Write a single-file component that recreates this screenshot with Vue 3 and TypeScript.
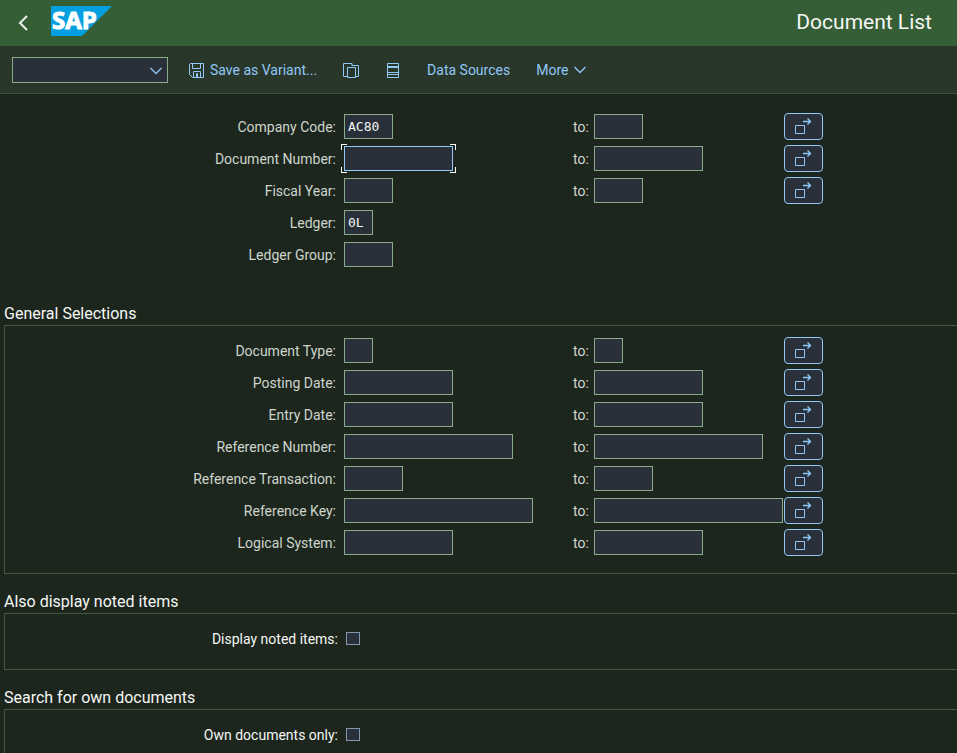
<script setup lang="ts">
import { ref } from 'vue'

interface Criterion {
  id: string
  label: string
  chars: number
  range: boolean
}

const variant = ref('')
const focusedField = ref('document-number')

const documentCriteria: Criterion[] = [
  { id: 'company-code', label: 'Company Code:', chars: 4, range: true },
  { id: 'document-number', label: 'Document Number:', chars: 10, range: true },
  { id: 'fiscal-year', label: 'Fiscal Year:', chars: 4, range: true },
  { id: 'ledger', label: 'Ledger:', chars: 2, range: false },
  { id: 'ledger-group', label: 'Ledger Group:', chars: 4, range: false },
]

const generalCriteria: Criterion[] = [
  { id: 'document-type', label: 'Document Type:', chars: 2, range: true },
  { id: 'posting-date', label: 'Posting Date:', chars: 10, range: true },
  { id: 'entry-date', label: 'Entry Date:', chars: 10, range: true },
  { id: 'reference-number', label: 'Reference Number:', chars: 16, range: true },
  { id: 'reference-transaction', label: 'Reference Transaction:', chars: 5, range: true },
  { id: 'reference-key', label: 'Reference Key:', chars: 18, range: true },
  { id: 'logical-system', label: 'Logical System:', chars: 10, range: true },
]

const blocks = [
  { title: '', rows: documentCriteria },
  { title: 'General Selections', rows: generalCriteria },
]

const checks = [
  { id: 'noted-items', title: 'Also display noted items', label: 'Display noted items:' },
  { id: 'own-documents', title: 'Search for own documents', label: 'Own documents only:' },
]

const values = ref<Record<string, string>>({ 'company-code': 'AC80', ledger: '0L' })
const flags = ref<Record<string, boolean>>({})

const fieldWidth = (chars: number) => ({ width: `${chars * 10 + 9}px` })
</script>

<template>
  <div class="page">
    <header class="shell">
      <button class="back" type="button" aria-label="Back">
        <svg width="12" height="16" viewBox="0 0 12 16"><path d="M10 1 3 8l7 7" /></svg>
      </button>
      <svg class="logo" width="61" height="30" viewBox="0 0 61 30" role="img" aria-label="SAP">
        <polygon points="0,0 61,0 31,30 0,30" />
        <text x="1" y="23">SAP</text>
      </svg>
      <h1>Document List</h1>
    </header>

    <nav class="toolbar">
      <div class="variant">
        <select v-model="variant" aria-label="Variant">
          <option value=""></option>
        </select>
        <svg class="chevron" width="12" height="8" viewBox="0 0 12 8"><path d="M.5 1 6 6.500 11.500 1" /></svg>
      </div>
      <button class="save" type="button">
        <svg width="15" height="15" viewBox="0 0 15 15">
          <path d="M1.500.5h13v14h-11l-3-3v-10l1-1zM3.500.5v5h8v-5M4.500 14.500v-6h7v6M7.500 14v-3.500h1V14" />
        </svg>
        Save as Variant...
      </button>
      <button class="copy" type="button" aria-label="Get Variant">
        <svg width="16" height="15" viewBox="0 0 16 15">
          <path d="M4 13.500H.5V.5H9V2M8.500 2.500h7v11H13M4.500 4.500h8v10h-8z" />
        </svg>
      </button>
      <button class="list" type="button" aria-label="Dynamic Selections">
        <svg width="12" height="15" viewBox="0 0 12 15">
          <path d="M.5.5h11v14H.5zM.5 3.500h11M.5 4.500h11M.5 9.500h11M.5 11.500h11" />
        </svg>
      </button>
      <button class="sources" type="button">Data Sources</button>
      <button class="more" type="button">
        More
        <svg class="chevron" width="12" height="8" viewBox="0 0 12 8"><path d="M.5 1 6 6.500 11.500 1" /></svg>
      </button>
    </nav>

    <main>
      <section v-for="block in blocks" :key="block.title">
        <h2 v-if="block.title">{{ block.title }}</h2>
        <div class="group" :class="{ framed: block.title }">
          <div v-for="row in block.rows" :key="row.id" class="row">
            <label class="name" :for="row.id">{{ row.label }}</label>
            <span class="field" :class="{ focused: focusedField === row.id }">
              <input
                :id="row.id"
                v-model="values[row.id]"
                type="text"
                :style="fieldWidth(row.chars)"
                @focus="focusedField = row.id"
              />
            </span>
            <template v-if="row.range">
              <label class="to" :for="row.id + '-to'">to:</label>
              <span class="field" :class="{ focused: focusedField === row.id + '-to' }">
                <input
                  :id="row.id + '-to'"
                  v-model="values[row.id + '-to']"
                  type="text"
                  :style="fieldWidth(row.chars)"
                  @focus="focusedField = row.id + '-to'"
                />
              </span>
              <button class="multi" type="button" aria-label="Multiple selection">
                <svg width="17" height="17" viewBox="0 0 17 17">
                  <path d="M.5 7.500h9v8h-9z" />
                  <path class="arrow" d="M8 3.500h7.500M12.500.5l3 3-3 3" />
                </svg>
              </button>
            </template>
          </div>
        </div>
      </section>

      <section v-for="check in checks" :key="check.id">
        <h2>{{ check.title }}</h2>
        <div class="group framed">
          <div class="check">
            <label :for="check.id">{{ check.label }}</label>
            <input :id="check.id" v-model="flags[check.id]" type="checkbox" />
          </div>
        </div>
      </section>
    </main>
  </div>
</template>

<style>
body {
  background: #1d261d;
}
</style>

<style scoped>
.page {
  height: 100vh;
  display: flex;
  flex-direction: column;
  overflow: hidden;
  background: #1d261d;
  color: #f5f7f5;
  font-family: Roboto, 'Liberation Sans', sans-serif;
  font-size: 14px;
}

.page * {
  box-sizing: border-box;
}

svg {
  display: block;
  flex: none;
  fill: none;
  stroke: #91c8f6;
}

button {
  padding: 0;
  border: 0;
  background: none;
  color: #91c8f6;
  font: inherit;
  cursor: pointer;
}

.shell {
  flex: none;
  display: flex;
  align-items: center;
  height: 46px;
  padding: 0 25px 0 17px;
  background: #355e37;
}

.back svg {
  stroke: #e8f3e8;
  stroke-width: 2;
}

.chevron,
.arrow {
  stroke-width: 1.3;
}

.shell .logo {
  margin: 0 auto 4px 22px;
  overflow: visible;
  stroke: none;
}

.logo polygon {
  fill: #049fe0;
}

.logo text {
  fill: #fff;
  stroke: #fff;
  stroke-width: 1px;
  font: 700 24px 'Open Sans', sans-serif;
}

h1 {
  margin: 0;
  padding-bottom: 2px;
  font-size: 21px;
  font-weight: 400;
  line-height: 28px;
}

.toolbar {
  flex: none;
  display: flex;
  align-items: center;
  padding: 11px 12px 10px;
  border-bottom: 1px solid #3c523d;
  background: #29372a;
}

.toolbar button {
  display: flex;
  align-items: center;
  gap: 6px;
  height: 26px;
  white-space: nowrap;
}

.variant {
  position: relative;
  width: 156px;
  margin-right: 21px;
}

.variant select {
  display: block;
  width: 100%;
  height: 26px;
  border: 1px solid #89ab88;
  border-radius: 0;
  background: #29303a;
  color: inherit;
  font: inherit;
  appearance: none;
}

.variant svg {
  position: absolute;
  top: 10px;
  right: 6px;
  pointer-events: none;
}

.save,
.sources {
  margin-right: 26px;
}

.copy,
.list {
  margin-right: 28px;
}

main {
  flex: 1;
  min-height: 0;
  overflow: hidden;
  padding-left: 4px;
}

h2 {
  margin: 0;
  padding-top: 17px;
  font-size: 16px;
  font-weight: 400;
  line-height: 22px;
}

.group {
  display: flex;
  flex-direction: column;
  gap: 5px;
  padding: 19px 0 18px 1px;
}

.framed {
  padding: 11px 0 17px;
  border: 1px solid #3c5a3d;
  border-right: 0;
}

.row {
  display: grid;
  grid-template-columns: 339px 229px 21px 190px 39px;
  align-items: center;
  height: 27px;
}

.name,
.to {
  color: #cdd5cd;
}

.name {
  padding-right: 8px;
  text-align: right;
}

.field {
  position: relative;
  justify-self: start;
}

.field input {
  display: block;
  height: 25px;
  padding: 0 3px;
  border: 1px solid #89ab88;
  border-radius: 0;
  outline: 0;
  background: #29303a;
  color: #f5f7f5;
  font: 13px 'DejaVu Sans Mono', monospace;
}

.focused input {
  border-color: #91c8f6;
}

/* white corner brackets around the active field */
.focused::after {
  content: '';
  position: absolute;
  inset: -2px -3px;
  pointer-events: none;
  --ink: linear-gradient(#fff, #fff);
  background:
    var(--ink) 0 0 / 6px 1px,
    var(--ink) 0 0 / 1px 6px,
    var(--ink) 100% 0 / 6px 1px,
    var(--ink) 100% 0 / 1px 6px,
    var(--ink) 0 100% / 6px 1px,
    var(--ink) 0 100% / 1px 6px,
    var(--ink) 100% 100% / 6px 1px,
    var(--ink) 100% 100% / 1px 6px;
  background-repeat: no-repeat;
}

.multi {
  display: flex;
  align-items: center;
  justify-content: center;
  height: 27px;
  border: 1px solid #91c8f6;
  border-radius: 4px;
  background: #29303a;
}

.check {
  display: flex;
  align-items: center;
  gap: 8px;
  height: 27px;
}

.check label {
  width: 333px;
  text-align: right;
}

.check input {
  width: 14px;
  height: 13px;
  margin: 0;
  border: 1px solid #8396b0;
  background: #29303a;
  appearance: none;
}

.check input:checked {
  background: #91c8f6;
}
</style>
